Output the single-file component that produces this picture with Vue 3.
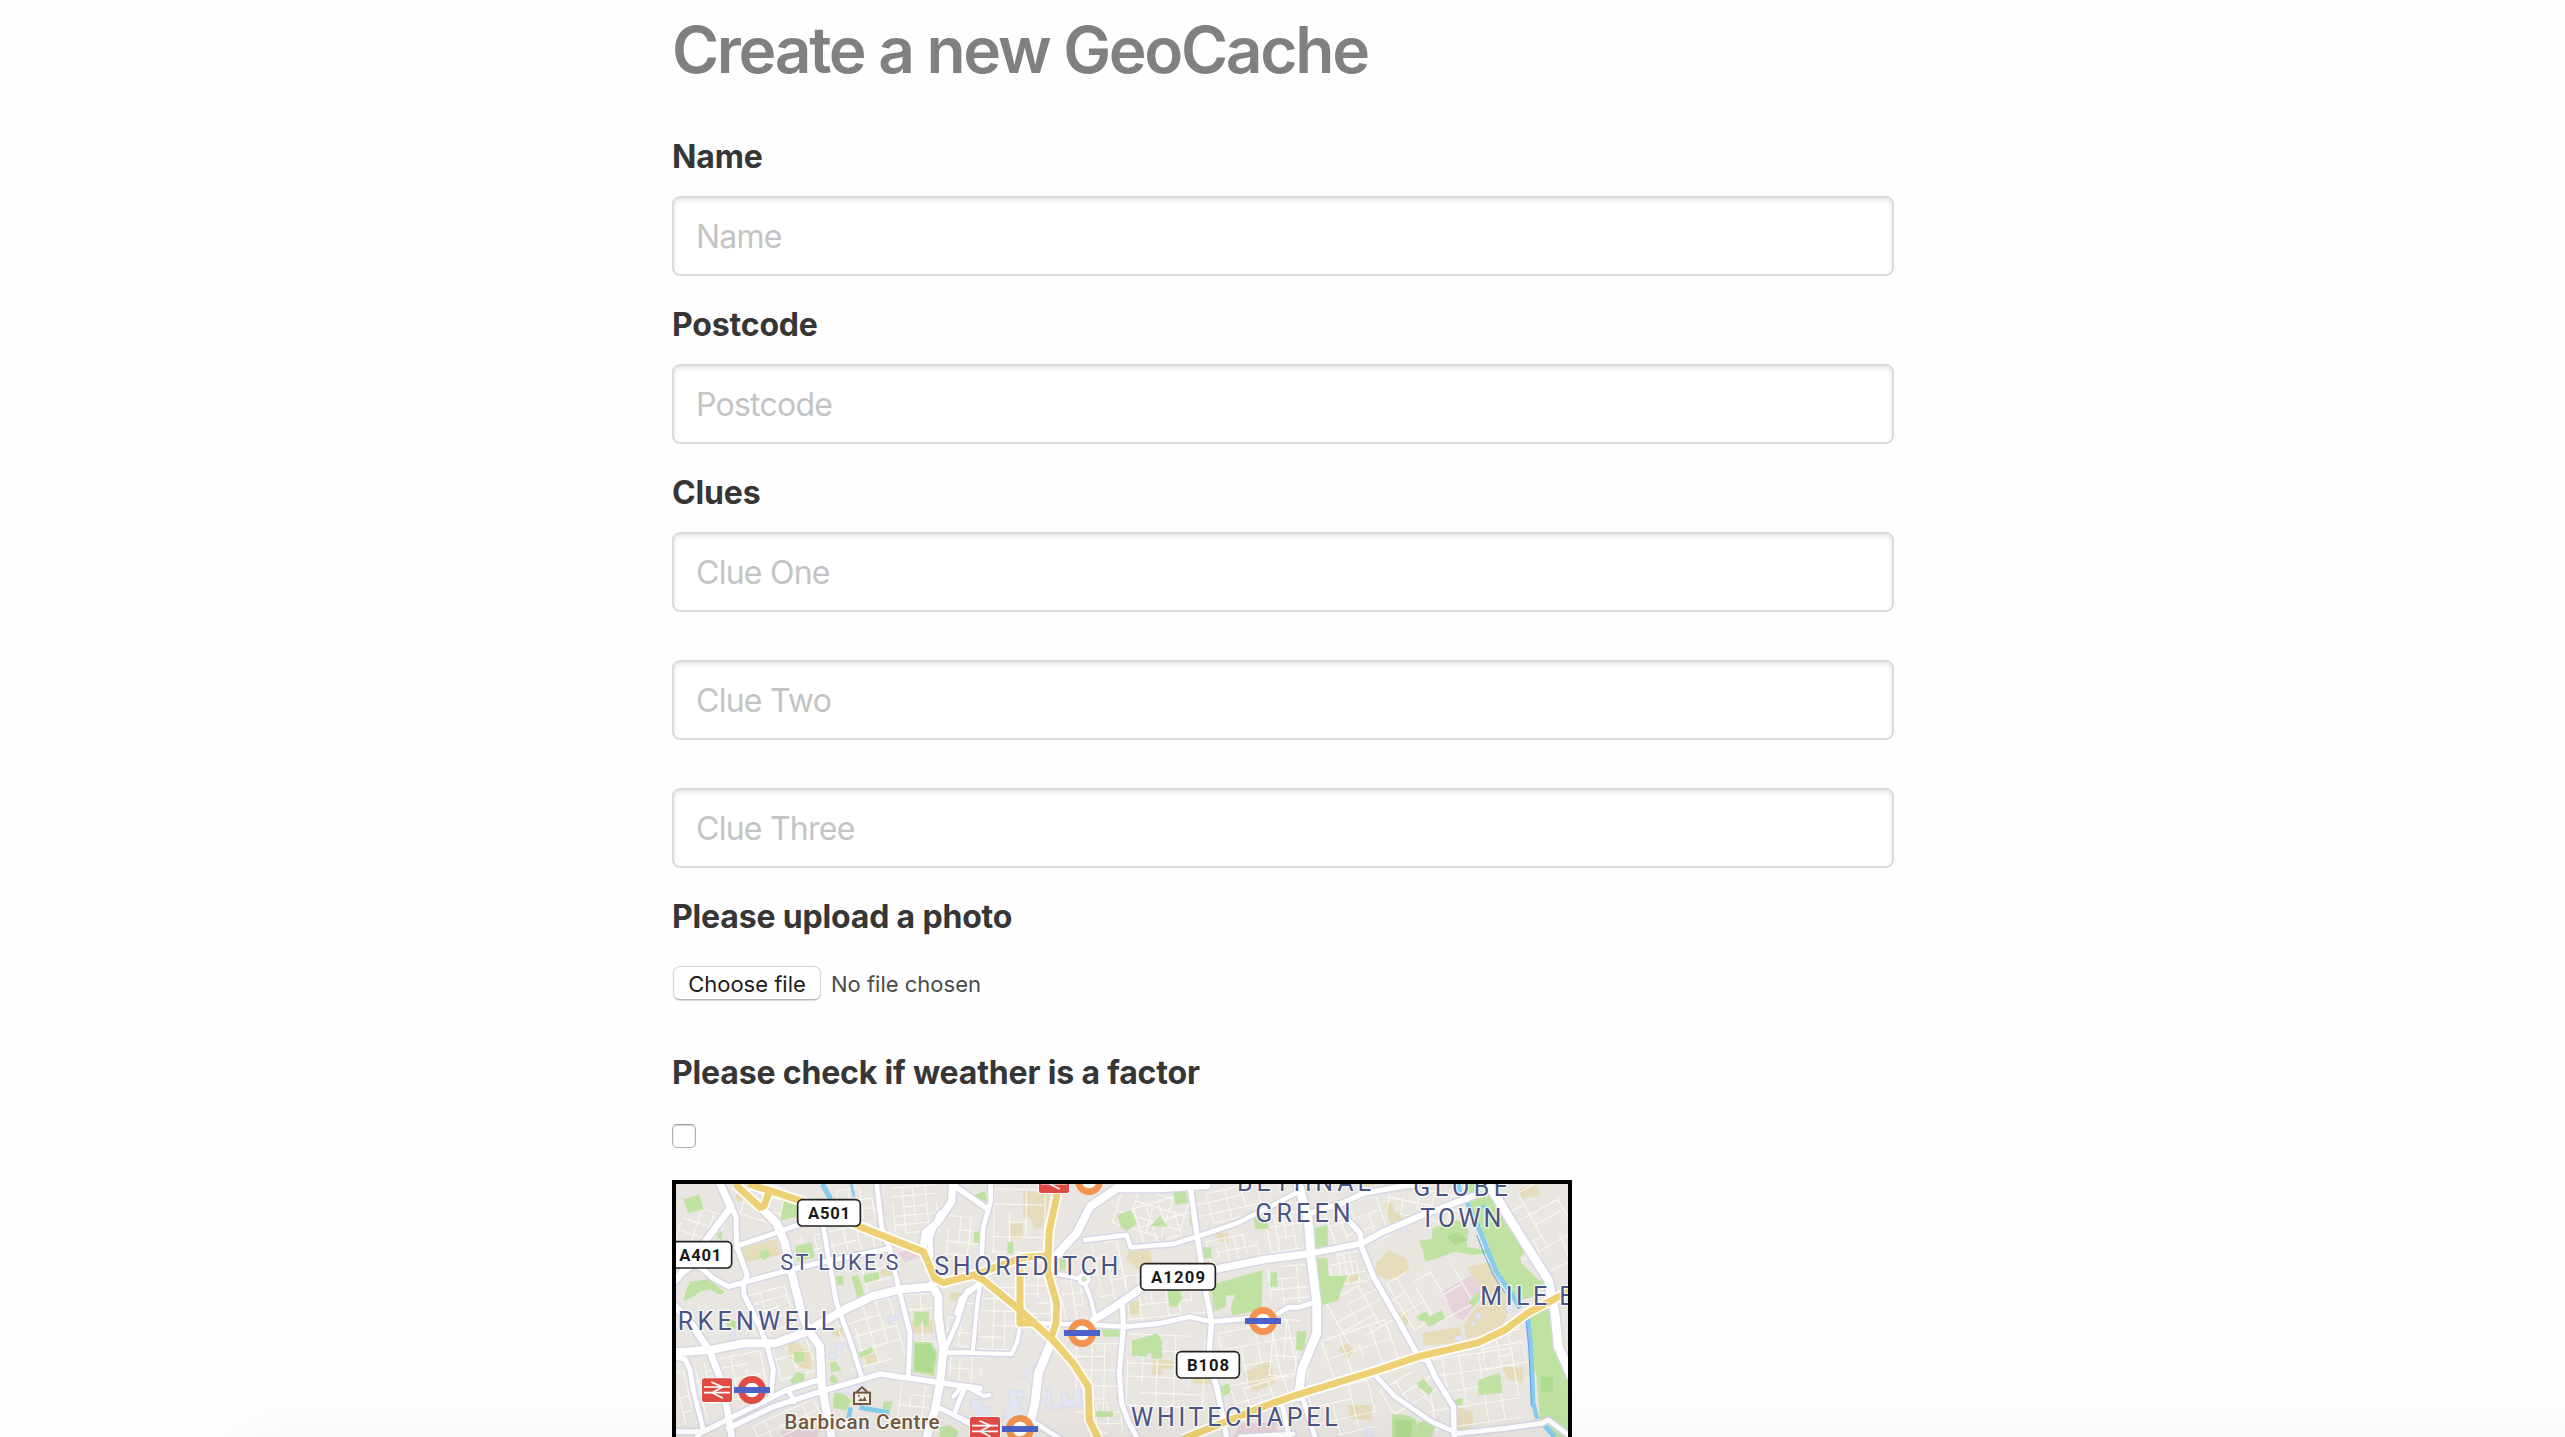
<script setup>
const fields = [
  { label: 'Name', inputs: ['Name'] },
  { label: 'Postcode', inputs: ['Postcode'] },
  { label: 'Clues', inputs: ['Clue One', 'Clue Two', 'Clue Three'] },
]

const parks = [
  '70,88 118,74 131,118 84,130', '372,92 412,108 408,140 360,152', '405,228 455,217 464,262 412,275',
  '75,372 90,335 145,328 194,366 178,374 150,358 118,366 100,380 72,394', '300,245 322,238 330,256 314,270 298,262',
  '528,318 550,318 550,346 530,346', '574,320 594,314 616,384 594,390', '610,316 655,306 660,326 615,340',
  '762,426 806,424 806,468 790,468 788,452 776,470 764,468', '762,516 814,516 832,552 822,618 758,606',
  '402,546 432,546 432,576 402,576', '598,548 636,530 640,546 600,564', '390,630 410,606 436,612 430,634 396,642',
  '510,578 528,574 544,602 512,606', '508,622 520,612 536,632 528,640 512,638', '522,668 545,668 575,690 560,720 518,715',
  '670,696 698,694 688,738 668,730', '840,772 868,766 896,784 888,801 838,801', '200,460 212,446 228,456 230,476 204,474', '170,194 186,182 186,208 172,208',
  '940,76 976,62 982,96 948,84', '942,184 958,184 958,218 942,218', '1042,216 1060,216 1060,250 1042,250',
  '1372,135 1414,120 1430,162 1400,182 1384,174', '1470,168 1500,138 1524,170', '1538,60 1574,54 1585,98 1546,104',
  '1522,360 1560,360 1566,385 1550,412 1528,408', '1625,232 1652,232 1656,264 1632,266', '1588,142 1602,142 1606,180 1590,166',
  '1652,345 1808,300 1805,420 1718,436 1712,412 1725,376 1698,376 1698,410 1662,424', '1326,478 1378,478 1380,500 1330,500',
  '1416,512 1492,490 1506,514 1506,566 1476,566 1474,548 1462,550 1460,560 1416,556', '1676,650 1708,640 1712,668 1682,682',
  '1305,724 1360,724 1360,740 1308,742', '1782,142 1815,142 1828,176 1784,178', '1200,262 1218,262 1215,300 1200,300',
  '1965,174 2002,165 2004,228 1968,234', '1966,265 2002,265 2006,318 2064,316 2048,350 2034,392 1986,405 1972,330',
  '1832,308 1850,305 1854,350 1830,350', '1910,484 1940,484 1935,525 1930,543 1908,540',
  '2278,212 2315,206 2318,174 2395,150 2425,180 2420,230 2475,240 2498,222 2508,248 2440,255 2380,245 2340,262 2295,276 2288,240',
  '2424,42 2445,42 2445,70 2420,78', '2424,92 2490,76 2510,110 2595,245 2580,262 2585,280 2635,330 2655,335 2620,380 2576,392 2530,350 2500,280 2480,210',
  '2272,438 2300,424 2305,440 2345,420 2355,446 2305,472 2295,456 2276,450', '2425,395 2460,362 2460,390 2438,412',
  '2605,440 2665,415 2690,540 2724,620 2724,801 2690,801 2640,750 2628,605 2615,600',
  '2455,630 2520,608 2528,668 2455,676', '2270,640 2290,626 2320,660 2308,675 2275,652', '2196,732 2240,735 2270,750 2270,801 2196,801', '2272,760 2300,750 2330,762 2315,801 2268,801', '2382,690 2408,684 2408,704 2384,710',
]
const plots = [
  '242,235 350,207 360,255 250,278', '386,515 420,520 432,546 402,548 402,575 432,578 432,540 456,536 454,596 430,596 410,580 384,558',
  '870,368 908,368 908,394 870,394', '606,562 650,550 654,574 616,584', '516,480 545,472 552,500 520,500', '756,452 820,450 820,490 758,488', '225,75 250,66 255,88 232,96', '660,300 702,290 705,315 665,320',
  '1090,60 1170,75 1155,170 1124,178 1110,140 1090,145', '1052,160 1088,160 1088,205 1052,208', '1405,240 1470,240 1480,290 1450,300 1430,296 1400,270',
  '1400,395 1438,392 1438,432 1398,436', '1478,570 1525,570 1540,575 1540,596 1506,598 1506,615 1475,612', '1662,190 1704,188 1704,216 1675,214',
  '1750,610 1830,568 1845,640 1780,665', '1590,600 1670,605 1670,642 1600,640', '2148,280 2188,240 2240,268 2247,305 2185,330 2150,312',
  '2055,328 2102,305 2102,320 2072,346', '2035,535 2060,518 2082,542 2060,568', '2175,98 2198,98 2205,130 2225,128 2228,150 2190,158',
  '2420,292 2500,275 2520,350 2550,390 2535,455 2500,485 2420,508 2412,468 2440,420 2480,380', '2065,705 2136,705 2136,750 2068,745', '2576,56 2630,44 2640,76 2585,86',
  '2526,590 2590,590 2590,640 2545,628', '2395,712 2438,725 2438,782 2390,782', '2210,430 2240,422 2246,460 2225,475', '2085,42 2150,42 2120,50', '2290,490 2400,470 2410,520 2290,525',
]
const pinks = ['715,248 750,238 790,255 735,278', '2342,368 2435,315 2465,350 2460,372 2425,392 2440,412 2410,450 2390,444', '1740,760 1850,755 1850,801 1720,801', '365,780 420,760 480,780 470,801 360,801']
const buildings = [
  '680,445 722,430 726,440 688,462', '524,525 560,515 562,530 528,540', '506,548 528,546 530,566 508,570', '1085,610 1130,580 1112,615 1090,625 1072,622',
  '1160,656 1170,654 1176,706 1200,704 1200,715 1158,720', '1204,668 1222,668 1222,690 1240,690 1240,660 1262,658 1268,708 1206,714',
  '1040,658 1092,665 1090,686 1068,680 1100,735 1060,752 1030,740 1050,690', '930,690 960,688 972,714 992,710 988,730 960,748 934,715',
  '2212,172 2240,168 2245,185 2228,188', '2442,432 2462,430 2462,446 2448,448', '2432,455 2446,450 2444,468 2434,468', '2384,500 2410,494 2404,518 2386,516', '2535,410 2560,405 2560,425 2540,428',
  '2475,565 2488,562 2488,582 2478,584', '2118,775 2136,778 2138,801 2118,801', '202,505 222,484 228,492 205,515', '520,650 570,640 620,650 600,680 540,668', '1500,205 1515,205 1515,215 1500,215',
]

// Secondary streets: [stroke width, route]
const roads = [
  [15, 'M180 42L212 105L228 140L230 230L262 315L250 345L252 375L300 470L325 540L340 600L332 680'],
  [20, 'M212 112L135 215L48 330'], [22, 'M180 42L212 110'],
  [24, 'M300 110L350 160L375 220L395 310L425 430L445 480L480 530L485 640L495 700L515 801'],
  [24, 'M48 547L150 540L250 520L345 520L430 490L560 415L640 378L720 358L810 350'],
  [14, 'M230 228L300 205L400 170L500 135'],
  [15, 'M48 325L100 285L125 295L160 325L205 350L260 335L370 305L470 280L560 262L690 235'],
  [20, 'M48 410L100 470L150 545L190 650L215 801'],
  [14, 'M48 562L75 567L90 600L100 660L130 780L110 801'],
  [14, 'M490 170L510 290L530 400L570 510L605 620'],
  [14, 'M650 42L665 170L690 240L715 350L750 490L745 615'],
  [22, 'M878 42L875 95L830 160L795 190L790 240'], [16, 'M840 130L810 200L812 260'],
  [24, 'M815 345L835 380L835 440L850 540L840 640L825 720L800 801'],
  [15, 'M48 785L130 785L270 715L380 660L475 630'],
  [16, 'M205 775L340 710L480 665L600 630L660 612L840 638L960 655'],
  [14, 'M385 660L403 695'],
  [14, 'M855 548L932 548'], [14, 'M960 340L920 365L890 460L855 540'],
  [14, 'M830 710L930 758'], [14, 'M915 650L885 725'], [16, 'M870 38L980 115'],
  [16, 'M1590 42L1610 190L1640 380L1655 455L1645 570L1670 650L1700 801'],
  [24, 'M1640 45L1500 55L1370 55L1290 110L1250 190L1190 255'],
  [13, 'M1275 210L1400 195L1412 232L1540 222L1610 200L1730 160L1830 110L1915 65'],
  [22, 'M1300 450L1350 420L1450 350L1600 305'],
  [22, 'M1600 310L1670 297L1815 268L1955 250'], [18, 'M1955 250L2105 220L2170 185L2275 140L2440 78'],
  [14, 'M1090 458L1300 465L1400 470L1500 460L1590 440L1655 455L1800 442'],
  [15, 'M1387 400L1390 470L1378 610L1385 700L1405 755L1430 801'],
  [12, 'M1195 312L1256 325'], [12, 'M1276 345L1292 385L1305 440'],
  [26, 'M1170 525L1135 610L1125 700L1105 780'],
  [12, 'M1078 480L1072 515L1055 552L900 548'], [12, 'M960 340L950 420L938 548'], [14, 'M890 430L905 385L960 340'],
  [14, 'M992 42L992 95L970 170L965 260'],
  [12, 'M880 680L905 650L930 655L970 678L988 675'], [14, 'M880 735L930 762'], [14, 'M1120 755L1200 806'],
  [26, 'M1915 42L1945 150L1953 260L1970 400L1970 490L1925 600L1915 680'],
  [14, 'M1930 690L1965 801'], [14, 'M1868 710L1888 801'], [14, 'M1740 801L1900 792'],
  [16, 'M2065 150L2100 190L2105 230L2140 320L2215 450L2275 560L2305 575L2325 620L2380 710L2383 801'],
  [16, 'M1950 130L2045 100L2110 70L2165 60L2270 42'],
  [26, 'M2490 50L2595 220L2665 330L2685 430L2695 530L2735 620'],
  [14, 'M1855 430L1885 412L1915 412L1960 398'],
  [14, 'M2150 620L2205 680L2315 755L2395 790L2535 775L2645 760L2665 750L2724 795'],
]
const trunk = [
  'M225 42L300 112L312 108L330 60', 'M265 42L330 62L430 95L600 170L790 245L825 325L850 338L960 310L1010 290L1090 262L1165 258',
  'M1192 42L1190 80L1168 180L1162 300L1190 400L1188 460L1172 505', 'M940 315L970 330L1080 420L1180 512L1240 580L1285 650L1288 750L1315 806',
  'M1080 300L1080 460L1130 458', 'M1570 806L1815 708L1900 678L2155 600L2275 560L2455 518L2535 480L2605 428L2735 360',
]

// Residential street grids: [x, y, width, height, rotation, columns, rows]
const grids = [
  [55, 120, 120, 160, 20, 3, 4], [250, 45, 150, 110, 18, 4, 3], [270, 360, 120, 120, -14, 3, 4], [140, 560, 170, 130, -10, 4, 4],
  [60, 600, 60, 160, -12, 2, 4], [345, 520, 110, 100, -14, 2, 3], [430, 180, 210, 90, -12, 5, 2], [530, 60, 110, 90, -6, 3, 3], [700, 50, 130, 140, -4, 4, 5],
  [545, 400, 170, 180, -15, 4, 4], [610, 270, 90, 90, -12, 2, 3], [740, 370, 85, 240, -3, 2, 5], [860, 400, 80, 130, 8, 2, 3], [720, 640, 100, 110, 8, 3, 3],
  [280, 730, 200, 60, -24, 5, 2], [870, 560, 90, 80, 5, 3, 2], [860, 140, 100, 120, 8, 3, 3], [1000, 60, 150, 190, 2, 3, 4],
  [960, 350, 110, 190, 3, 3, 5], [1090, 290, 85, 140, 2, 2, 5], [1210, 330, 80, 120, -8, 3, 3], [1310, 220, 80, 190, -10, 2, 5],
  [1370, 70, 200, 120, 18, 4, 3], [1430, 90, 160, 120, -16, 4, 2], [1600, 60, 200, 90, -12, 4, 3], [1640, 200, 150, 80, -10, 5, 2],
  [1400, 310, 230, 130, -5, 6, 3], [1250, 520, 120, 210, 2, 3, 5], [1400, 500, 230, 210, 3, 5, 5], [1690, 470, 210, 160, -10, 4, 3],
  [1720, 640, 160, 80, -16, 4, 2], [1310, 700, 70, 90, 0, 2, 3], [1820, 130, 110, 110, -8, 4, 3], [1830, 290, 120, 130, -4, 3, 4], [1830, 450, 120, 170, 6, 3, 3],
  [2010, 100, 160, 130, -18, 4, 3], [2015, 250, 100, 90, -8, 5, 3], [2020, 350, 170, 140, -28, 3, 4], [2000, 480, 200, 120, -18, 4, 2],
  [2180, 320, 110, 160, -30, 3, 3], [2290, 300, 120, 140, -28, 2, 2], [2180, 60, 230, 90, 12, 5, 2], [2530, 60, 180, 180, -28, 2, 5],
  [2650, 200, 80, 180, -20, 1, 4], [2310, 550, 260, 210, -8, 5, 4], [1960, 650, 180, 140, -12, 3, 3], [2180, 610, 170, 130, -30, 3, 3], [2470, 490, 120, 100, -10, 3, 3],
]
const lanes = grids.map(([x, y, w, h, angle, cols, rows], g) => {
  let d = ''
  for (let i = 0; i <= cols; i++) {
    const px = x + (w * i) / cols + ((i * 7 + g * 5) % 9) - 4
    const a = (i * 3 + g) % 4 === 0 ? h * 0.35 : 0
    const b = (i * 5 + g) % 3 === 0 ? h * 0.3 : 0
    d += `M${px} ${y + a}L${px + 3} ${y + h - b}`
  }
  for (let i = 0; i <= rows; i++) {
    const py = y + (h * i) / rows + ((i * 5 + g * 3) % 7) - 3
    const a = (i * 2 + g) % 3 === 0 ? w / cols : 0
    const b = (i + g) % 3 === 1 ? w / cols : 0
    d += `M${x + a} ${py}L${x + w - b} ${py - 2}`
  }
  return { d, rotate: `rotate(${angle} ${x + w / 2} ${y + h / 2})` }
})

const places = [
  { t: 'ST LUKE’S', x: 361, y: 301, w: 354, s: 65 },
  { t: 'SHOREDITCH', x: 823, y: 316, w: 552, s: 75 },
  { t: 'RKENWELL', x: 53, y: 481, w: 470, s: 75 },
  { t: 'BETHNAL', x: 1731, y: 64, w: 402, s: 75 },
  { t: 'GREEN', x: 1786, y: 155, w: 286, s: 75 },
  { t: 'GLOBE', x: 2260, y: 79, w: 284, s: 75 },
  { t: 'TOWN', x: 2281, y: 170, w: 243, s: 75 },
  { t: 'MILE', x: 2461, y: 404, w: 201, s: 75 },
  { t: 'E', x: 2698, y: 404, w: 44, s: 75 },
  { t: 'WHITECHAPEL', x: 1413, y: 767, w: 620, s: 75 },
]
const shields = [
  { t: 'A501', x: 413, y: 89, w: 188 },
  { t: 'A401', x: 27, y: 215, w: 188 },
  { t: 'A1209', x: 1442, y: 281, w: 224 },
  { t: 'B108', x: 1550, y: 545, w: 188 },
]
const rails = [[126, 625], [1137, -2], [930, 741]]
const roundels = [
  { x: 276, y: 660, c: '#e04c45' }, { x: 1287, y: 33, c: '#f2934f' }, { x: 1266, y: 489, c: '#f2934f' },
  { x: 1080, y: 777, c: '#f2934f' }, { x: 1809, y: 453, c: '#f2934f' },
]
</script>

<template>
  <main class="page">
    <form class="form" @submit.prevent>
      <h1 class="title">Create a new GeoCache</h1>

      <section v-for="f in fields" :key="f.label" class="field">
        <label class="label">{{ f.label }}</label>
        <div class="controls">
          <input v-for="p in f.inputs" :key="p" class="input" type="text" :placeholder="p" />
        </div>
      </section>

      <section class="field upload">
        <label class="label">Please upload a photo</label>
        <div class="file">
          <button type="button" class="choose">Choose file</button>
          <span class="filename">No file chosen</span>
        </div>
      </section>

      <section class="field weather">
        <label class="label">Please check if weather is a factor</label>
        <input class="check" type="checkbox" />
      </section>

      <div class="map">
        <svg viewBox="48 42 2676 759" width="892" height="253">
          <rect x="48" y="42" width="2676" height="759" fill="#e9e6e1" />
          <g fill="#e4dcba"><polygon v-for="p in plots" :key="p" :points="p" /></g>
          <g fill="#e5d3d9"><polygon v-for="p in pinks" :key="p" :points="p" /></g>
          <g fill="none" stroke="#faf9f6" stroke-width="3">
            <path v-for="(l, i) in lanes" :key="i" :d="l.d" :transform="l.rotate" />
          </g>
          <g fill="#bfe2a3"><polygon v-for="p in parks" :key="p" :points="p" /></g>
          <g fill="#aedb90">
            <polygon points="2360,200 2392,186 2424,210 2385,226" />
            <polygon points="2642,618 2680,622 2680,664 2644,668" />
            <polygon points="2205,750 2258,752 2252,801 2205,801" />
            <polygon points="766,522 810,522 826,554 816,608 764,600" />
          </g>
          <g fill="#e3e6f0" stroke="#d3d8e8" stroke-width="2"><polygon v-for="p in buildings" :key="p" :points="p" /></g>
          <g fill="none" stroke="#86ccee" stroke-linejoin="round">
            <path d="M2395 42L2400 68" stroke-width="14" />
            <path d="M2420 95L2436 130L2465 195L2490 260L2512 310L2550 365L2580 415" stroke-width="14" />
            <path d="M2604 445L2612 520L2617 620L2620 700L2632 747" stroke-width="13" />
            <path d="M2650 763L2685 801" stroke-width="15" />
            <path d="M2458 120L2470 108L2484 120L2490 140" stroke-width="7" />
            <path d="M487 42L512 88" stroke-width="16" />
            <path d="M574 42L582 80" stroke-width="8" />
            <path d="M566 745L572 712M598 712L686 728" stroke-width="14" />
          </g>
          <g fill="none" stroke="#5f9bea" stroke-width="3">
            <path d="M2450 195L2476 260L2500 315L2536 370M2598 450L2606 530L2611 630L2614 710" />
          </g>
          <g fill="none" stroke="#d6d7e4" stroke-linejoin="round" stroke-linecap="round">
            <path v-for="(r, i) in roads" :key="i" :d="r[1]" :stroke-width="r[0] + 9" />
          </g>
          <circle cx="1272" cy="327" r="24" fill="#d6d7e4" />
          <g fill="none" stroke="#fff" stroke-linejoin="round" stroke-linecap="round">
            <path v-for="(r, i) in roads" :key="i" :d="r[1]" :stroke-width="r[0]" />
          </g>
          <circle cx="1272" cy="327" r="14" fill="#cfe5bf" stroke="#fff" stroke-width="12" />
          <g fill="none" stroke="#fff" stroke-width="31" stroke-linejoin="round"><path v-for="d in trunk" :key="d" :d="d" /></g>
          <g fill="none" stroke="#eed074" stroke-width="21" stroke-linejoin="round"><path v-for="d in trunk" :key="d" :d="d" /></g>

          <g v-for="r in rails" :key="r[0]" :transform="`translate(${r[0]} ${r[1]})`">
            <rect x="-3" y="-3" width="96" height="77" rx="8" fill="#fff" opacity=".75" />
            <rect width="90" height="71" rx="6" fill="#e04c45" />
            <path d="M6 26H84M6 43H84M28 11L62 26L30 43L62 59" fill="none" stroke="#fff" stroke-width="5" />
          </g>
          <g v-for="r in roundels" :key="r.x" :transform="`translate(${r.x} ${r.y})`">
            <circle r="32" fill="#fff" :stroke="r.c" stroke-width="20" />
            <rect v-if="r.y > 42" x="-54" y="-9" width="108" height="18" fill="#4c62c6" />
          </g>

          <g class="place">
            <text v-for="p in places" :key="p.t" :x="p.x" :y="p.y" :font-size="p.s" :textLength="p.w">{{ p.t }}</text>
          </g>
          <g fill="none" stroke="#75563f" stroke-width="6">
            <rect x="582" y="668" width="48" height="34" fill="#f4f0eb" />
            <path d="M590 666L606 652L622 666" />
            <path d="M594 693L602 684L608 690L614 679L620 693Z" fill="#75563f" stroke="none" />
            <rect x="594" y="675" width="5" height="5" fill="#75563f" stroke="none" />
          </g>
          <text class="poi" x="373" y="777" textLength="466">Barbican Centre</text>
          <g v-for="s in shields" :key="s.t" class="shield">
            <rect :x="s.x" :y="s.y" :width="s.w" height="79" rx="14" />
            <text :x="s.x + s.w / 2" :y="s.y + 58" :textLength="s.w - 62">{{ s.t }}</text>
          </g>
        </svg>
      </div>
    </form>
    <div class="dock-shadow"></div>
  </main>
</template>

<style>
body { background: #fff; overflow: hidden; }
</style>

<style scoped>
* { box-sizing: border-box; }
.page {
  position: relative;
  height: 1437px;
  overflow: hidden;
  background: #fefefe;
  color: #363636;
  font-family: Inter, "Liberation Sans", sans-serif;
}
.form { width: 1222px; margin-left: 672px; }
.title {
  margin: 0 0 34px;
  padding-top: 2px;
  font-size: 64px;
  line-height: 96px;
  font-weight: 600;
  letter-spacing: -2.3px;
  color: #808080;
  white-space: nowrap;
}
.field { margin-bottom: 24px; }
.label {
  display: block;
  margin-bottom: 15px;
  padding-top: 1px;
  font-size: 32px;
  line-height: 48px;
  font-weight: 700;
  letter-spacing: -0.17px;
}
.controls { display: flex; flex-direction: column; gap: 48px; }
.input {
  width: 100%;
  height: 80px;
  margin: 0;
  padding: 1px 22px 0;
  border: 2px solid #dbdbdb;
  border-radius: 8px;
  background: #fff;
  box-shadow: inset 0 2px 4px rgba(10, 10, 10, 0.1);
  font: 400 32px Inter, "Liberation Sans", sans-serif;
  letter-spacing: -0.75px;
}
.input::placeholder { color: #c4c4c4; opacity: 1; }
.upload { margin-bottom: 48px; }
.upload .label { margin-bottom: 25px; }
.file { display: flex; align-items: center; gap: 10px; height: 34px; font-size: 22px; }
.choose {
  width: 148px;
  height: 34px;
  margin-left: 1px;
  padding: 1px 0 0;
  border: 1px solid #d2d2d2;
  border-bottom-color: #b5b5b5;
  border-radius: 7px;
  background: #fff;
  box-shadow: 0 1px 1px rgba(0, 0, 0, 0.15);
  color: #1c1c1c;
  font: inherit;
}
.filename { padding-top: 1px; color: #4a4a4a; white-space: nowrap; }
.weather { margin-bottom: 32px; }
.weather .label { margin-bottom: 27px; }
.check {
  display: block;
  appearance: none;
  width: 24px;
  height: 24px;
  margin: 0;
  border: 1px solid #b0b0b0;
  border-top-color: #999;
  border-radius: 5px;
  background: #fff;
  box-shadow: inset 0 1px 2px rgba(0, 0, 0, 0.18);
}
.map { width: 900px; height: 700px; border: 4px solid #000; background: #e9e6e1; }
.map svg { display: block; }
.map text { font-family: Roboto, "Liberation Sans", sans-serif; }
.place text {
  fill: #4a5484;
  stroke: rgba(255, 255, 255, 0.75);
  stroke-width: 8px;
  stroke-linejoin: round;
  paint-order: stroke;
  font-weight: 400;
}
.poi {
  font-size: 62px;
  font-weight: 500;
  fill: #75593f;
  stroke: rgba(255, 255, 255, 0.8);
  stroke-width: 8px;
  paint-order: stroke;
}
.shield rect { fill: #fff; stroke: #222; stroke-width: 5px; }
.shield text { font-size: 50px; font-weight: 700; fill: #1a1a1a; text-anchor: middle; }
.dock-shadow {
  position: absolute;
  left: 240px;
  right: -120px;
  top: 1450px;
  height: 200px;
  border-radius: 10px;
  box-shadow: 0 0 70px rgba(0, 0, 0, 0.07);
}
</style>
